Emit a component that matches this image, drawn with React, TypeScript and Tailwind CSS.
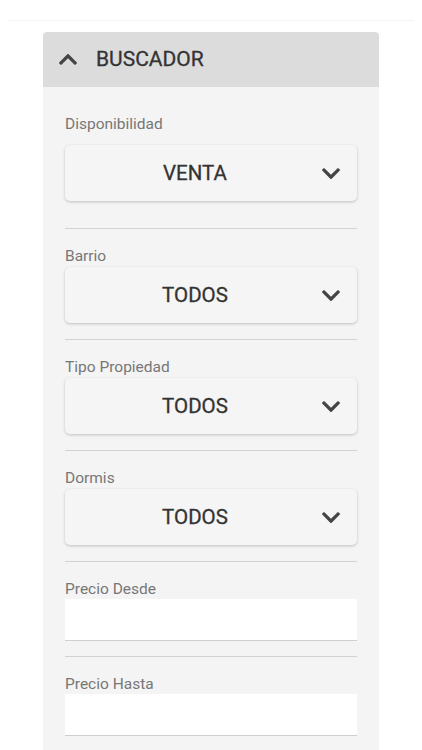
import React from 'react';

const ChevronDown: React.FC = () => (
  <svg viewBox="5 120 438 270" className="w-[18px] h-[11px] fill-[#444]">
    <path d="M207.029 381.476L12.686 187.132c-9.373-9.373-9.373-24.569 0-33.941l22.667-22.667c9.357-9.357 24.522-9.375 33.901-.04L224 284.505l154.745-154.021c9.379-9.335 24.544-9.317 33.901.04l22.667 22.667c9.373 9.373 9.373 24.569 0 33.941L240.971 381.476c-9.373 9.372-24.569 9.372-33.942 0z" />
  </svg>
);

const ChevronUp: React.FC = () => (
  <svg viewBox="5 122 438 270" className="w-[18px] h-[11px] fill-[#444]">
    <path d="M240.971 130.524l194.343 194.343c9.373 9.373 9.373 24.569 0 33.941l-22.667 22.667c-9.357 9.357-24.522 9.375-33.901.04L224 227.495 69.255 381.516c-9.379 9.335-24.544 9.317-33.901-.04l-22.667-22.667c-9.373-9.373-9.373-24.569 0-33.941L207.03 130.525c9.372-9.373 24.568-9.373 33.941-.001z" />
  </svg>
);

const Label: React.FC<{ text: string }> = ({ text }) => (
  <div className="text-[15.5px] leading-[18px] text-[#777]">{text}</div>
);

const SelectBox: React.FC<{ value: string }> = ({ value }) => (
  <div className="flex items-center h-[56px] rounded-[5px] bg-[#f5f5f5] shadow-[0_1px_3px_rgba(0,0,0,0.22)]">
    <span className="flex-1 text-center text-[20.5px] font-normal [-webkit-text-stroke:0.3px_#333] text-[#333]">
      {value}
    </span>
    <span className="-ml-[3px] mr-[17px] flex">
      <ChevronDown />
    </span>
  </div>
);

const Divider: React.FC = () => <div className="h-px bg-[#d2d2d2]" />;

const InputBox: React.FC = () => (
  <div className="h-[42px] bg-white border-b border-[#cfcfcf]" />
);

const selects = [
  { label: 'Barrio', value: 'TODOS' },
  { label: 'Tipo Propiedad', value: 'TODOS' },
  { label: 'Dormis', value: 'TODOS' },
];

export default function App() {
  return (
    <div className="min-h-[750px] bg-white font-['Roboto',sans-serif] overflow-hidden">
      <div className="pt-[20px] px-[8px]">
        <div className="h-px bg-[#f3f3f3]" />
      </div>
      <div className="ml-[43px] mt-[11px] w-[336px]">
        <div className="h-[55px] bg-[#dcdcdc] rounded-t-[4px] flex items-center pl-[16px]">
          <ChevronUp />
          <span className="ml-[19px] text-[21px] font-normal [-webkit-text-stroke:0.3px_#333] text-[#333]">
            BUSCADOR
          </span>
        </div>
        <div className="bg-[#f4f4f4] px-[22px] pt-[28px] pb-[20px]">
          <Label text="Disponibilidad" />
          <div className="mt-[12px] mb-[27px]">
            <SelectBox value="VENTA" />
          </div>
          <Divider />
          {selects.map((s) => (
            <div key={s.label}>
              <div className="pt-[18px] pb-[16px]">
                <Label text={s.label} />
                <div className="mt-[2px]">
                  <SelectBox value={s.value} />
                </div>
              </div>
              <Divider />
            </div>
          ))}
          <div className="pt-[18px] pb-[15px]">
            <Label text="Precio Desde" />
            <div className="mt-[1px]">
              <InputBox />
            </div>
          </div>
          <Divider />
          <div className="pt-[18px] pb-[16px]">
            <Label text="Precio Hasta" />
            <div className="mt-[1px]">
              <InputBox />
            </div>
          </div>
        </div>
      </div>
    </div>
  );
}
